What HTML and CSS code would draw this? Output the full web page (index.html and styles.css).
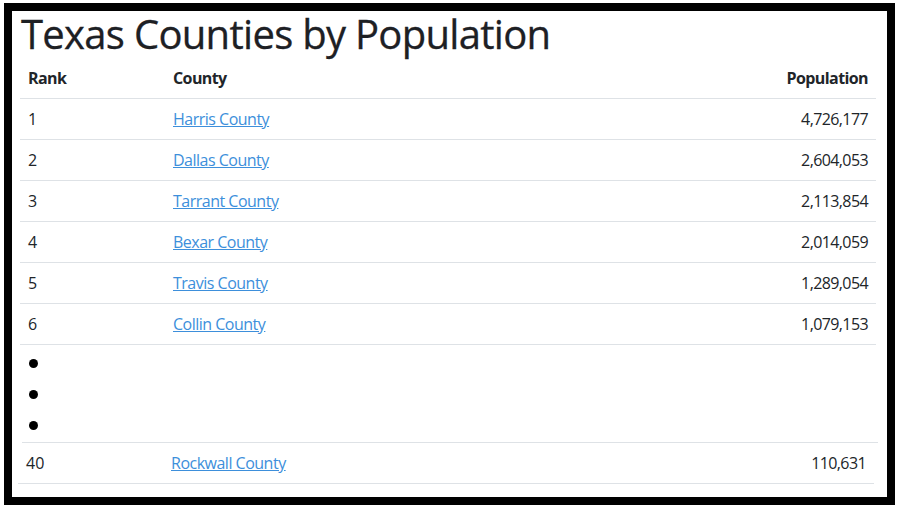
FILE: index.html
```html
<!DOCTYPE html>
<html lang="en">
<head>
<meta charset="utf-8">
<title>Texas Counties by Population</title>
<link rel="stylesheet" href="styles.css">
</head>
<body>
<div class="frame">
  <h1 class="title">Texas Counties by Population</h1>
  <table class="counties">
    <thead>
      <tr><th class="rank">Rank</th><th class="county">County</th><th class="pop">Population</th></tr>
    </thead>
    <tbody>
      <tr><td class="rank">1</td><td class="county"><a href="#">Harris County</a></td><td class="pop">4,726,177</td></tr>
      <tr><td class="rank">2</td><td class="county"><a href="#">Dallas County</a></td><td class="pop">2,604,053</td></tr>
      <tr><td class="rank">3</td><td class="county"><a href="#">Tarrant County</a></td><td class="pop">2,113,854</td></tr>
      <tr><td class="rank">4</td><td class="county"><a href="#">Bexar County</a></td><td class="pop">2,014,059</td></tr>
      <tr><td class="rank">5</td><td class="county"><a href="#">Travis County</a></td><td class="pop">1,289,054</td></tr>
      <tr><td class="rank">6</td><td class="county"><a href="#">Collin County</a></td><td class="pop">1,079,153</td></tr>
    </tbody>
  </table>
  <div class="ellipsis">
    <span class="dot"></span>
    <span class="dot"></span>
    <span class="dot"></span>
  </div>
  <table class="counties last">
    <tbody>
      <tr><td class="rank">40</td><td class="county"><a href="#">Rockwall County</a></td><td class="pop">110,631</td></tr>
    </tbody>
  </table>
</div>
</body>
</html>
```

FILE: styles.css
```css
html, body {
  margin: 0;
  padding: 0;
  background: #fff;
}
body {
  font-family: "Segoe UI", "Open Sans", "Noto Sans", sans-serif;
  font-size: 16px;
  line-height: 24px;
  color: #212529;
}
.frame {
  margin: 3px 0 0 4px;
  width: 875px;
  height: 486px;
  border: 8px solid #000;
  background: #fff;
}
.title {
  margin: 0;
  padding: 0 0 2px 9px;
  font-size: 40px;
  line-height: 45px;
  font-weight: 500;
  letter-spacing: -0.7px;
  color: #1d2024;
  -webkit-text-stroke: 0.3px #1d2024;
}
.counties {
  margin-left: 8px;
  width: 856px;
  border-collapse: collapse;
}
.counties th,
.counties td {
  padding: 8px;
  border-bottom: 1px solid #dee2e6;
  text-align: left;
  vertical-align: top;
}
.counties th {
  font-weight: 700;
  letter-spacing: -0.6px;
}
.counties .rank {
  width: 129px;
}
.counties .pop {
  text-align: right;
}
.counties td.pop {
  letter-spacing: -0.6px;
}
.counties a {
  color: #3d8fdb;
  text-decoration: underline;
  letter-spacing: -0.5px;
}
.ellipsis {
  margin-left: 10px;
  width: 856px;
  box-sizing: border-box;
  padding: 14px 0 12px 7px;
  border-bottom: 1px solid #dee2e6;
  display: flex;
  flex-direction: column;
  gap: 22px;
}
.dot {
  display: block;
  width: 9px;
  height: 9px;
  border-radius: 50%;
  background: #000;
}
.counties.last {
  margin-left: 6px;
}
```
